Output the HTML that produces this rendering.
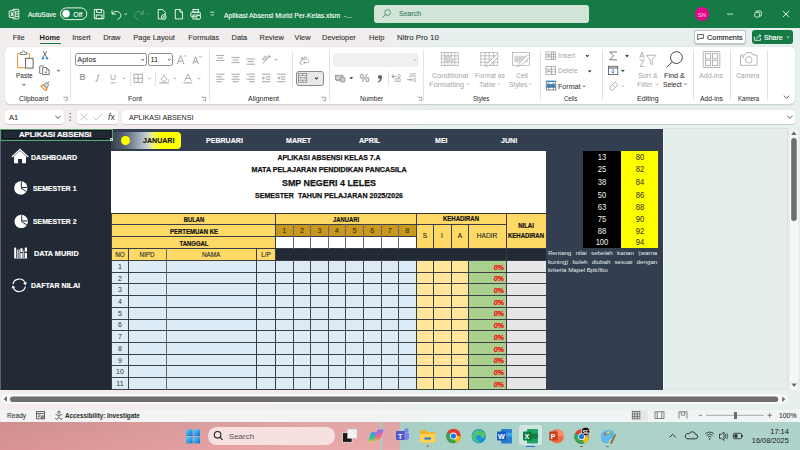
<!DOCTYPE html>
<html><head><meta charset="utf-8">
<style>
*{margin:0;padding:0;box-sizing:border-box}
html,body{width:800px;height:450px;overflow:hidden;font-family:"Liberation Sans",sans-serif}
body{position:relative;background:linear-gradient(90deg,#f3eded 0,#f2eded 370px,#e8f0ef 430px,#e7f0ef 800px)}
.a{position:absolute}
.t{position:absolute;white-space:nowrap;line-height:1}
svg{position:absolute;left:0;top:0;overflow:visible}
</style></head><body>
<div class="a" style="left:0.00px;top:0.00px;width:800.00px;height:27.60px;background:#157a43;"></div>
<svg width="800" height="28" viewBox="0 0 800 28" fill="none" stroke="#fff" stroke-width="0.9">
<rect x="12.6" y="9.3" width="6.2" height="9.6" rx="0.6"/>
<line x1="14.8" y1="11.8" x2="18.8" y2="11.8"/><line x1="14.8" y1="14.1" x2="18.8" y2="14.1"/><line x1="14.8" y1="16.4" x2="18.8" y2="16.4"/>
<rect x="9.2" y="10.8" width="6" height="6.6" fill="#157a43" rx="0.4"/>
<path d="M10.9 12.3 L13.5 16 M13.5 12.3 L10.9 16" stroke-width="1.1"/>
<rect x="60.5" y="7.9" width="26.3" height="11.7" rx="5.85"/>
<circle cx="66.1" cy="13.75" r="3.7" fill="#fff" stroke="none"/>
<path d="M94.3 9.5 h8 l1.6 1.6 v7.6 h-9.6 z"/><rect x="96.6" y="9.5" width="5" height="2.8"/><rect x="96.2" y="15" width="5.8" height="3.7"/>
<path d="M112 10.3 v3.8 h3.8"/><path d="M112.3 14 C113.5 11,118.5 10.5,120.3 13.5 C121.8 16,120 18.5,117.5 19.3"/>
<path d="M124.4 13.4 l1.3 1.3 l1.3 -1.3" stroke-width="0.8"/>
<g stroke="#5fa682"><path d="M143.4 10.3 v3.8 h-3.8"/><path d="M143.1 14 C141.9 11,136.9 10.5,135.1 13.5 C133.6 16,135.4 18.5,137.9 19.3"/>
<path d="M147.2 13.4 l1.3 1.3 l1.3 -1.3" stroke-width="0.8"/></g>
<path d="M158.2 9.5 h4.4 l2.6 2.6 v6.8 h-7 z"/><circle cx="163.8" cy="17" r="2.3" fill="#157a43"/><path d="M162.7 17 h2.2 M163.8 15.9 v2.2" stroke-width="0.7"/>
<path d="M175.3 9.5 h4.6 l2.6 2.6 v6.8 h-7.2 z"/><path d="M179.9 9.5 v2.6 h2.6"/>
<rect x="193" y="9.4" width="5.4" height="2.8"/><rect x="190.9" y="12.2" width="9.4" height="4.6" rx="0.8"/><rect x="193" y="15" width="5.4" height="4"/><circle cx="198.6" cy="17.3" r="2.1" fill="#157a43"/>
<path d="M210.4 12.2 h3.9" stroke-width="0.8"/><path d="M210.7 14.1 l1.65 1.7 l1.65 -1.7" stroke-width="0.8"/>
<path d="M727 14.1 h6" stroke-width="0.8"/>
<rect x="754.8" y="12.4" width="4.8" height="4.6" rx="0.9" stroke-width="0.8"/><path d="M756.2 12.2 v-0.3 a0.9 0.9 0 0 1 0.9 -0.9 h3.3 a0.9 0.9 0 0 1 0.9 0.9 v3.3 a0.9 0.9 0 0 1 -0.9 0.9 h-0.6" stroke-width="0.8"/>
<path d="M782.9 11 l6.3 6.1 M789.2 11 l-6.3 6.1" stroke-width="0.85"/>
</svg>
<div class="t" style="left:28.00px;top:12.06px;font-size:6.9px;color:#fff;transform:scaleX(0.94);transform-origin:0 0;-webkit-text-stroke:0.1px #fff;">AutoSave</div>
<div class="t" style="left:73.30px;top:11.76px;font-size:6.9px;color:#fff;-webkit-text-stroke:0.1px #fff;">Off</div>
<div class="t" style="left:224.30px;top:11.77px;font-size:7.0px;color:#fff;transform:scaleX(0.975);transform-origin:0 0;-webkit-text-stroke:0.1px #fff;">Aplikasi Absensi Murid Per-Kelas.xlsm &nbsp;-...</div>
<div class="a" style="left:374.40px;top:5.10px;width:215.00px;height:17.90px;background:#d1e4d8;border-radius:3px;"></div>
<svg width="800" height="28" fill="none" stroke="#4b8a66" stroke-width="0.9"><circle cx="387.6" cy="12.5" r="2.9"/><path d="M385.5 14.6 l-2.8 2.9" stroke-width="1"/></svg>
<div class="t" style="left:398.90px;top:10.07px;font-size:7.6px;color:#3f7d58;transform:scaleX(0.9253);transform-origin:0 0;-webkit-text-stroke:0.1px #3f7d58;">Search</div>
<div class="a" style="left:694.8px;top:7.2px;width:14px;height:14px;border-radius:50%;background:#e4058c"></div>
<div class="t" style="left:501.80px;width:400px;text-align:center;top:11.52px;font-size:6.0px;color:#ffd8ef;letter-spacing:-0.2px;">SN</div>
<div class="t" style="left:12.70px;top:33.64px;font-size:7.4px;color:#303030;-webkit-text-stroke:0.1px #303030;">File</div>
<div class="t" style="left:39.60px;top:33.64px;font-size:7.4px;color:#1a1a1a;font-weight:bold;">Home</div>
<div class="t" style="left:72.20px;top:33.64px;font-size:7.4px;color:#303030;-webkit-text-stroke:0.1px #303030;">Insert</div>
<div class="t" style="left:103.20px;top:33.64px;font-size:7.4px;color:#303030;-webkit-text-stroke:0.1px #303030;">Draw</div>
<div class="t" style="left:133.35px;top:33.64px;font-size:7.4px;color:#303030;-webkit-text-stroke:0.1px #303030;">Page Layout</div>
<div class="t" style="left:188.35px;top:33.64px;font-size:7.4px;color:#303030;-webkit-text-stroke:0.1px #303030;">Formulas</div>
<div class="t" style="left:231.60px;top:33.64px;font-size:7.4px;color:#303030;-webkit-text-stroke:0.1px #303030;">Data</div>
<div class="t" style="left:259.60px;top:33.64px;font-size:7.4px;color:#303030;-webkit-text-stroke:0.1px #303030;">Review</div>
<div class="t" style="left:294.60px;top:33.64px;font-size:7.4px;color:#303030;-webkit-text-stroke:0.1px #303030;">View</div>
<div class="t" style="left:322.10px;top:33.64px;font-size:7.4px;color:#303030;-webkit-text-stroke:0.1px #303030;">Developer</div>
<div class="t" style="left:369.10px;top:33.64px;font-size:7.4px;color:#303030;-webkit-text-stroke:0.1px #303030;">Help</div>
<div class="t" style="left:396.60px;top:33.64px;font-size:7.4px;color:#303030;transform:scaleX(1.06);transform-origin:0 0;-webkit-text-stroke:0.1px #303030;">Nitro Pro 10</div>
<div class="a" style="left:40.00px;top:42.60px;width:21.00px;height:1.50px;background:#157a43;border-radius:1px;"></div>
<div class="a" style="left:694.40px;top:30.10px;width:52.00px;height:13.50px;background:#fff;border:0.8px solid #c4c4c4;border-radius:3px;box-shadow:0 0.5px 0.8px rgba(0,0,0,.18);"></div>
<svg width="800" height="50" fill="none" stroke="#333" stroke-width="0.8"><path d="M697.6 34.6 h5.8 v3.8 h-3.8 l-1.8 1.6 z"/></svg>
<div class="t" style="left:706.80px;top:33.64px;font-size:7.4px;color:#2a2a2a;transform:scaleX(0.9972);transform-origin:0 0;-webkit-text-stroke:0.15px #2a2a2a;">Comments</div>
<div class="a" style="left:751.60px;top:30.10px;width:41.30px;height:13.50px;background:#157a43;border-radius:3px;"></div>
<svg width="800" height="50" fill="none" stroke="#fff" stroke-width="0.8"><path d="M754.4 36.5 v3.8 h6.2 v-2.2"/><path d="M756.6 38.8 c0.3 -2 1.6 -3 3.8 -3 M759.4 34.4 l1.6 1.4 l-1.6 1.4"/><path d="M786.9 36.5 l1.2 1.2 l1.2 -1.2"/></svg>
<div class="t" style="left:763.60px;top:33.64px;font-size:7.4px;color:#fff;transform:scaleX(0.9519);transform-origin:0 0;-webkit-text-stroke:0.15px #fff;">Share</div>
<div class="a" style="left:5.00px;top:46.60px;width:790.00px;height:57.30px;background:#fff;border-radius:5px;box-shadow:0 0.8px 1.4px rgba(0,0,0,.15);"></div>
<div class="a" style="left:70.30px;top:50.00px;width:0.80px;height:51.00px;background:#e3e3e3;"></div>
<div class="a" style="left:208.80px;top:50.00px;width:0.80px;height:51.00px;background:#e3e3e3;"></div>
<div class="a" style="left:291.60px;top:52.00px;width:0.80px;height:35.00px;background:#e3e3e3;"></div>
<div class="a" style="left:328.50px;top:50.00px;width:0.80px;height:51.00px;background:#e3e3e3;"></div>
<div class="a" style="left:423.40px;top:50.00px;width:0.80px;height:51.00px;background:#e3e3e3;"></div>
<div class="a" style="left:539.50px;top:50.00px;width:0.80px;height:51.00px;background:#e3e3e3;"></div>
<div class="a" style="left:601.50px;top:50.00px;width:0.80px;height:51.00px;background:#e3e3e3;"></div>
<div class="a" style="left:693.40px;top:50.00px;width:0.80px;height:51.00px;background:#e3e3e3;"></div>
<div class="a" style="left:729.70px;top:50.00px;width:0.80px;height:51.00px;background:#e3e3e3;"></div>
<div class="a" style="left:766.50px;top:50.00px;width:0.80px;height:51.00px;background:#e3e3e3;"></div>
<div class="a" style="left:129.50px;top:71.00px;width:0.80px;height:15.00px;background:#e3e3e3;"></div>
<div class="a" style="left:155.40px;top:71.00px;width:0.80px;height:15.00px;background:#e3e3e3;"></div>
<div class="a" style="left:388.00px;top:71.00px;width:0.80px;height:15.00px;background:#e3e3e3;"></div>
<div class="t" style="left:19.00px;top:94.52px;font-size:7.3px;color:#262626;transform:scaleX(0.9376);transform-origin:0 0;">Clipboard</div>
<div class="t" style="left:127.75px;top:94.52px;font-size:7.3px;color:#262626;transform:scaleX(0.9589);transform-origin:0 0;">Font</div>
<div class="t" style="left:248.40px;top:94.52px;font-size:7.3px;color:#262626;transform:scaleX(0.9553);transform-origin:0 0;">Alignment</div>
<div class="t" style="left:359.50px;top:94.52px;font-size:7.3px;color:#262626;transform:scaleX(0.896);transform-origin:0 0;">Number</div>
<div class="t" style="left:473.10px;top:94.52px;font-size:7.3px;color:#262626;transform:scaleX(0.8191);transform-origin:0 0;">Styles</div>
<div class="t" style="left:563.90px;top:94.52px;font-size:7.3px;color:#262626;transform:scaleX(0.8062);transform-origin:0 0;">Cells</div>
<div class="t" style="left:636.85px;top:94.52px;font-size:7.3px;color:#262626;transform:scaleX(0.9664);transform-origin:0 0;">Editing</div>
<div class="t" style="left:700.00px;top:94.52px;font-size:7.3px;color:#262626;transform:scaleX(0.9293);transform-origin:0 0;">Add-ins</div>
<div class="t" style="left:737.50px;top:94.52px;font-size:7.3px;color:#262626;transform:scaleX(0.8281);transform-origin:0 0;">Kamera</div>
<svg width="800" height="110" fill="none" stroke="#7a7a7a" stroke-width="0.7">
<path d="M63.3 97.2 h4 v3.6 M64.5 99.3 l2.4 1.8"/><path d="M201.6 97.2 h4 v3.6 M202.8 99.3 l2.4 1.8"/><path d="M321.4 97.2 h4 v3.6 M322.6 99.3 l2.4 1.8"/><path d="M417.7 97.2 h4 v3.6 M418.9 99.3 l2.4 1.8"/>
<path d="M784 95.7 l2.6 2.6 l2.6 -2.6" stroke="#444" stroke-width="0.9"/>
</svg>
<svg width="800" height="110" fill="none" stroke-width="0.9">
<path d="M20 53.8 h-1.8 q-0.6 0 -0.6 0.6 v12.6 q0 0.6 0.6 0.6 h7" stroke="#eda13a" stroke-width="1.1"/><path d="M27 53.8 h1.8 q0.6 0 0.6 0.6 v3.6" stroke="#eda13a" stroke-width="1.1"/>
<path d="M20.5 54.5 v-2 h1.6 a1.4 1.4 0 0 1 2.8 0 h1.6 v2 z" stroke="#666" stroke-width="0.8" fill="#fff"/>
<rect x="25.6" y="58.3" width="7.5" height="9.8" stroke="#555" fill="#fff"/>
<path d="M22.4 84 l1.5 1.4 l1.5 -1.4" stroke="#333" stroke-width="1"/>
<path d="M43.2 51.2 l3.4 6 M46.6 51.2 l-3.4 6" stroke="#444" stroke-width="0.75"/><circle cx="42.9" cy="58.2" r="1.25" fill="#3a90da" stroke="none"/><circle cx="47" cy="58.2" r="1.25" fill="#3a90da" stroke="none"/>
<path d="M43.8 66 h-3.6 q-0.5 0 -0.5 0.5 v6.6 q0 0.5 0.5 0.5 h1.6" stroke="#555" stroke-width="0.8"/><path d="M42.6 67.6 h4 l2.6 2.6 v4.3 h-6.6 z" stroke="#555" stroke-width="0.8" fill="#fff"/><path d="M46.6 67.6 v2.6 h2.6 M45.9 71.2 v2.2 M44.8 72.3 h2.2" stroke="#555" stroke-width="0.6"/>
<path d="M57.1 69.8 l1.4 1.4 l1.4 -1.4" stroke="#333" stroke-width="1"/>
<path d="M40.8 86.2 l2.6 -1.2 l3.6 3.4 l-1.3 2.2 z" fill="#fff" stroke="#e8862a" stroke-width="1.1" stroke-linejoin="round"/><path d="M43.6 85 l2.8 -2.6 l2.4 2.4 l-2 3.4 z" fill="#d8d8d8" stroke="#666" stroke-width="0.7"/><path d="M47.4 83.4 l1.8 -1.8" stroke="#555" stroke-width="0.9"/>
</svg>
<div class="t" style="left:15.70px;top:71.52px;font-size:7.3px;color:#262626;transform:scaleX(0.8901);transform-origin:0 0;">Paste</div>
<div class="a" style="left:75.25px;top:52.90px;width:71.25px;height:13.60px;background:#fff;border:0.8px solid #8c8c8c;border-radius:2.5px;"></div>
<div class="a" style="left:148.40px;top:52.90px;width:24.50px;height:13.60px;background:#fff;border:0.8px solid #8c8c8c;border-radius:2.5px;"></div>
<div class="t" style="left:77.30px;top:56.24px;font-size:7.4px;color:#222;">Aptos</div>
<div class="t" style="left:150.50px;top:56.24px;font-size:7.4px;color:#222;">11</div>
<svg width="800" height="110" fill="none" stroke="#333" stroke-width="0.8">
<path d="M141.3 59 l1.4 1.4 l1.4 -1.4"/><path d="M168 59 l1.4 1.4 l1.4 -1.4"/>
<g stroke="#8a8a8a"><path d="M177.3 64 l3.3 -8.5 l3.3 8.5 M178.5 61.2 h4.2"/><path d="M184 56.5 l1 -1 l1 1"/>
<path d="M192.8 64 l2.8 -7.2 l2.8 7.2 M193.8 61.8 h3.6"/><path d="M199.4 56.2 l1.2 1.2 l1.2 -1.2"/></g>
<g stroke="#9a9a9a"><path d="M122.5 77.8 l1.3 1.3 l1.3 -1.3"/><path d="M148 77.8 l1.3 1.3 l1.3 -1.3"/><path d="M173.4 77.8 l1.3 1.3 l1.3 -1.3"/><path d="M197.8 77.8 l1.3 1.3 l1.3 -1.3"/>
<rect x="134" y="74.2" width="8.3" height="8.3"/><path d="M138.15 74.2 v8.3 M134 78.35 h8.3"/>
<path d="M111 74.5 v3.3 a2 2 0 0 0 4 0 v-3.3 M110.5 82.8 h5"/>
<path d="M161 79 l3 -3.2 l3 3 l-3 3 z M164 75.8 v-1.4"/><path d="M168 79 q1 1.5 0 2.5"/><path d="M159.3 82.8 h9.6" stroke="#b0b0b0" stroke-width="1.2"/>
<path d="M184.5 81 l3.5 -7 l3.5 7 M185.7 78.5 h4.6"/><path d="M183.4 82.8 h9" stroke="#b0b0b0" stroke-width="1.2"/>
</g></svg>
<div class="t" style="left:79.40px;top:74.26px;font-size:8.2px;color:#9a9a9a;font-weight:bold;">B</div>
<svg width="800" height="110" fill="none" stroke="#9a9a9a" stroke-width="0.8"><path d="M96.6 81 l2 -5.8 M95.4 81 h2.4 M97.5 75.2 h2.4"/></svg>
<svg width="800" height="110" fill="none" stroke="#8e8e8e" stroke-width="0.8">
<text x="261.5" y="60" font-size="5.4" fill="#8e8e8e" stroke="none" font-family="Liberation Sans" transform="rotate(-40 264 58)">ab</text>
<path d="M216.3 55.4 h8 M217.3 58 h6 M216.3 60.6 h8"/>
<path d="M231.4 57.4 h8.3 M232.6 60 h6 M231.4 62.6 h8.3"/>
<path d="M246.5 59 h8.3 M247.6 61.6 h6 M246.5 64.2 h8.3"/>
<path d="M262.5 63.5 l7.5 -7.5 M268 56 h2 v2"/><path d="M274.5 59 l1.3 1.3 l1.3 -1.3"/>
<path d="M216.3 74.2 h8 M216.3 76.7 h5.6 M216.3 79.2 h8 M216.3 81.7 h5.6"/>
<path d="M231.4 74.2 h8.3 M232.6 76.7 h6 M231.4 79.2 h8.3 M232.6 81.7 h6"/>
<path d="M246.5 74.2 h8.3 M249.2 76.7 h5.6 M246.5 79.2 h8.3 M249.2 81.7 h5.6"/>
<path d="M262 74.2 h8.3 M266.2 76.8 h4.1 M266.2 79.2 h4.1 M262 81.7 h8.3 M262.2 78 h3 M263.6 76.7 l-1.4 1.3 l1.4 1.3"/>
<path d="M277 74.2 h8.3 M281.2 76.8 h4.1 M281.2 79.2 h4.1 M277 81.7 h8.3 M277.2 78 h3 M278.8 76.7 l1.4 1.3 l-1.4 1.3"/>
<path d="M302.5 60.8 q-2.5 0 -2.5 1.8 q0 1.8 2.5 1.8 M303.6 62.6 h4 q1 0 1 -1.3 v-1.5 M303.6 62.6 l1.2 -1.1 M303.6 62.6 l1.2 1.1" stroke-width="0.7"/>
</svg>
<div class="t" style="left:300.50px;top:54.55px;font-size:6.2px;color:#8e8e8e;">ab</div>
<div class="a" style="left:295.60px;top:71.25px;width:28.10px;height:14.35px;background:#e9e9e9;border:0.8px solid #8a8a8a;border-radius:3px;"></div>
<svg width="800" height="110" fill="none" stroke="#777" stroke-width="0.7">
<rect x="298.6" y="73.6" width="8.2" height="8.6" fill="#f6f6f6"/><path d="M298.6 75.6 h8.2 M298.6 80.2 h8.2 M302.7 73.6 v2 M302.7 80.2 v2 M299.6 77.9 h6.2 M300.6 77 l-1 0.9 l1 0.9 M304.8 77 l1 0.9 l-1 0.9"/>
<path d="M315.1 77.6 l1.4 1.4 l1.4 -1.4" stroke="#333" stroke-width="1.1"/>
</svg>
<div class="a" style="left:333.20px;top:52.90px;width:85.40px;height:14.00px;background:#f0f0f0;border-radius:3.5px;"></div>
<svg width="800" height="110" fill="none" stroke="#8e8e8e" stroke-width="0.8">
<path d="M413.6 59.4 l1.2 1.2 l1.2 -1.2" stroke="#aaa"/>
<rect x="335.4" y="75.2" width="7.5" height="4.6" fill="#ddd"/><path d="M336 80.6 h7 M336.2 76.8 h2 M339.6 76.8 h2"/><rect x="340.6" y="77.4" width="4.4" height="4.6" rx="0.8" fill="#ccc"/><path d="M350 77.6 h2.6 l-1.3 1.4 z" fill="#333" stroke="#333" stroke-width="0.6"/>
<path d="M391.8 76.5 l2.2 -2 M391.8 76.5 l2.2 2 M391.8 76.5 h4.5"/><path d="M407 79.7 h5 l-1.5 -1.5 M412 79.7 l-1.5 1.5"/>
</svg>
<div class="t" style="left:359.80px;top:73.19px;font-size:11px;color:#808080;">%</div>
<svg width="800" height="110" stroke="none" fill="#666"><circle cx="380" cy="77" r="2.1"/><path d="M381.6 77.5 q0.6 3.5 -3.6 5 l-0.3 -0.6 q2.6 -1.3 2.4 -3.6 z"/></svg>
<div class="t" style="left:397.50px;top:74.06px;font-size:5.6px;color:#8e8e8e;">0</div>
<div class="t" style="left:393.20px;top:78.26px;font-size:5.6px;color:#8e8e8e;">.00</div>
<div class="t" style="left:408.00px;top:73.26px;font-size:5.6px;color:#8e8e8e;">.00</div>
<div class="t" style="left:413.00px;top:78.26px;font-size:5.6px;color:#8e8e8e;">0</div>
<svg width="800" height="110" fill="none" stroke="#a8a8a8" stroke-width="0.7">
<rect x="441.2" y="52.5" width="17" height="13"/><path d="M441.2 55.8 h17 M441.2 59 h17 M441.2 62.3 h17 M444.6 52.5 v13 M448 52.5 v13 M451.4 52.5 v13 M454.8 52.5 v13"/>
<rect x="444.6" y="55.8" width="6.8" height="6.5" fill="#d4d4d4" stroke="none"/><rect x="448" y="59" width="6.8" height="3.3" fill="#d4d4d4" stroke="none"/>
<rect x="480.8" y="52.5" width="17" height="13"/><path d="M480.8 55.8 h17 M480.8 59 h17 M480.8 62.3 h17 M485 52.5 v13 M489.2 52.5 v13 M493.4 52.5 v13"/>
<path d="M486 67 l2 -4 l8.5 -8.5 l2 2 l-8.5 8.5 z" fill="#fff"/>
<rect x="512.6" y="52.5" width="17" height="13"/><rect x="514.4" y="55.8" width="13.4" height="6.5" fill="#d4d4d4" stroke="none"/>
<path d="M517.5 67 l2 -4 l8.5 -8.5 l2 2 l-8.5 8.5 z" fill="#fff"/>
</svg>
<div class="t" style="left:431.65px;top:71.52px;font-size:7.3px;color:#a6a6a6;transform:scaleX(0.9918);transform-origin:0 0;">Conditional</div>
<div class="t" style="left:429.40px;top:80.92px;font-size:7.3px;color:#a6a6a6;transform:scaleX(1.0086);transform-origin:0 0;">Formatting</div>
<div class="t" style="left:474.90px;top:71.52px;font-size:7.3px;color:#a6a6a6;transform:scaleX(0.9041);transform-origin:0 0;">Format as</div>
<div class="t" style="left:478.90px;top:80.92px;font-size:7.3px;color:#a6a6a6;transform:scaleX(0.957);transform-origin:0 0;">Table</div>
<div class="t" style="left:515.65px;top:71.52px;font-size:7.3px;color:#a6a6a6;transform:scaleX(0.9325);transform-origin:0 0;">Cell</div>
<div class="t" style="left:508.65px;top:80.92px;font-size:7.3px;color:#a6a6a6;transform:scaleX(0.9322);transform-origin:0 0;">Styles</div>
<svg width="800" height="110" fill="none" stroke="#a6a6a6" stroke-width="0.7"><path d="M466.7 83.6 l1.3 1.3 l1.3 -1.3 M497.5 83.6 l1.3 1.3 l1.3 -1.3 M529 83.6 l1.3 1.3 l1.3 -1.3"/></svg>
<svg width="800" height="110" fill="none" stroke="#9a9a9a" stroke-width="0.7">
<rect x="546" y="52" width="9.6" height="7.4"/><path d="M546 54.5 h9.6 M546 57 h9.6 M551.5 52 v7.4 M553.5 52 v7.4 M547.5 55.7 h2.6 M548.8 54.4 v2.6"/>
<rect x="546" y="66.6" width="9.6" height="7.8"/><path d="M546 69.2 h9.6 M546 71.8 h9.6 M551.5 66.6 v7.8 M547.5 69.8 l2.2 2.2 M549.7 69.8 l-2.2 2.2"/>
<path d="M586 55.2 l1.3 1.3 l1.3 -1.3 M588.4 70.3 l1.3 1.3 l1.3 -1.3" stroke="#333" stroke-width="1.1"/>
<rect x="546.2" y="81.6" width="9.6" height="8.4" stroke="#555"/><rect x="546.6" y="84.2" width="8.8" height="3.2" fill="#2b88d8" stroke="none"/><path d="M546.2 81.2 h9.6" stroke="#2b88d8" stroke-width="1.2"/><path d="M548.8 81.6 v8.4 M553.2 81.6 v8.4 M546.2 84.2 h9.6 M546.2 87.4 h9.6" stroke="#666" stroke-width="0.6"/>
<path d="M582.8 85.6 l1.3 1.3 l1.3 -1.3" stroke="#333" stroke-width="0.8"/>
</svg>
<div class="t" style="left:557.75px;top:52.32px;font-size:7.3px;color:#a6a6a6;transform:scaleX(0.9397);transform-origin:0 0;">Insert</div>
<div class="t" style="left:557.75px;top:67.42px;font-size:7.3px;color:#a6a6a6;transform:scaleX(0.936);transform-origin:0 0;">Delete</div>
<div class="t" style="left:557.75px;top:82.62px;font-size:7.3px;color:#262626;transform:scaleX(0.9762);transform-origin:0 0;">Format</div>
<svg width="800" height="110" fill="none" stroke="#555" stroke-width="0.8">
<path d="M617 52 h-7.2 l3.8 3.9 l-3.8 3.9 h7.2"/><path d="M625.6 55 l1.4 1.4 l1.4 -1.4" stroke="#333" stroke-width="1.1"/>
<rect x="608.4" y="66.3" width="9.4" height="8.3"/><path d="M608.4 68 h9.4" stroke-width="1"/><path d="M613.1 69 v4 M611.5 71.5 l1.6 1.6 l1.6 -1.6" stroke="#2b88d8" stroke-width="0.9"/><path d="M621.5 69.9 l1.4 1.4 l1.4 -1.4" stroke="#333" stroke-width="1.1"/>
<g stroke="#a6a6a6"><path d="M610 87 l5 -5 l3 3 l-5 5 h-2 z M612.5 84.5 l3 3"/><path d="M621.5 85.5 l1.2 1.2 l1.2 -1.2"/>
<path d="M646.3 55.2 h9.8 l-3.9 4.6 v4.8 l-2 -1 v-3.8 z"/><path d="M639.6 58.4 l2.4 -6.3 l2.4 6.3 M640.5 56.2 h3"/><path d="M639.9 60.2 h4.3 l-4.3 6.3 h4.4"/>
<path d="M655.8 83.7 l1.2 1.2 l1.2 -1.2"/></g>
<circle cx="676.4" cy="57.6" r="5.9" stroke="#333" stroke-width="0.9"/><path d="M672.2 61.8 l-5.7 5.8" stroke="#333" stroke-width="0.9"/>
<path d="M684.3 83.5 l1.3 1.3 l1.3 -1.3" stroke="#333" stroke-width="0.8"/>
<g stroke="#a6a6a6"><rect x="703.2" y="51.5" width="16.6" height="16" rx="0.6"/><rect x="705.4" y="53.6" width="5.3" height="5.2"/><rect x="712.4" y="53.6" width="5.3" height="5.2"/><rect x="705.4" y="60.3" width="5.3" height="5.2"/><rect x="712.4" y="60.3" width="5.3" height="5.2"/>
<path d="M740.5 55 h4.5 l1.5 -2.4 h5 l1.5 2.4 h4 v10.3 h-16.5 z"/><circle cx="748.8" cy="59.8" r="3.2"/><circle cx="743" cy="57" r="0.5" fill="#a6a6a6"/></g>
</svg>
<div class="t" style="left:637.90px;top:71.52px;font-size:7.3px;color:#a6a6a6;transform:scaleX(0.9655);transform-origin:0 0;">Sort &amp;</div>
<div class="t" style="left:636.85px;top:80.92px;font-size:7.3px;color:#a6a6a6;transform:scaleX(0.9537);transform-origin:0 0;">Filter</div>
<div class="t" style="left:664.00px;top:71.52px;font-size:7.3px;color:#262626;transform:scaleX(0.9905);transform-origin:0 0;">Find &amp;</div>
<div class="t" style="left:662.60px;top:80.92px;font-size:7.3px;color:#262626;transform:scaleX(0.9212);transform-origin:0 0;">Select</div>
<div class="t" style="left:699.40px;top:71.52px;font-size:7.3px;color:#a6a6a6;transform:scaleX(0.9737);transform-origin:0 0;">Add-ins</div>
<div class="t" style="left:736.20px;top:71.52px;font-size:7.3px;color:#a6a6a6;transform:scaleX(0.9077);transform-origin:0 0;">Camera</div>
<div class="a" style="left:5.25px;top:109.75px;width:59.00px;height:13.80px;background:#fff;border-radius:3px;box-shadow:0 0.5px 1px rgba(0,0,0,.15);"></div>
<div class="t" style="left:9.00px;top:113.94px;font-size:7.4px;color:#333;-webkit-text-stroke:0.15px #333;">A1</div>
<div class="a" style="left:76.80px;top:109.75px;width:41.70px;height:13.80px;background:#fff;border-radius:3px;box-shadow:0 0.5px 1px rgba(0,0,0,.15);"></div>
<div class="a" style="left:122.00px;top:109.75px;width:672.80px;height:13.80px;background:#fff;border-radius:3px;box-shadow:0 0.5px 1px rgba(0,0,0,.15);"></div>
<svg width="800" height="130" fill="none" stroke="#444" stroke-width="0.9">
<path d="M55.4 115.8 l2.6 2.6 l2.6 -2.6"/>
<circle cx="70.2" cy="113.6" r="0.65" fill="#444" stroke="none"/><circle cx="70.2" cy="116.9" r="0.65" fill="#444" stroke="none"/><circle cx="70.2" cy="120.2" r="0.65" fill="#444" stroke="none"/>
<path d="M80.5 113.2 l7 7 M87.5 113.2 l-7 7" stroke="#b5b5b5" stroke-width="0.8"/><path d="M93.2 117 l3 3 l6.5 -6.5" stroke="#b5b5b5" stroke-width="0.8"/>
<path d="M787.4 115.8 l2.6 2.6 l2.6 -2.6"/>
</svg>
<div class="t" style="left:108.00px;top:113.22px;font-size:8.6px;color:#333;font-family:"Liberation Serif",serif;"><i>f</i>x</div>
<div class="t" style="left:129.00px;top:114.12px;font-size:7.3px;color:#222;transform:scaleX(0.98);transform-origin:0 0;">APLIKASI ABSENSI</div>
<div class="a" style="left:0.00px;top:128.80px;width:787.00px;height:261.00px;background:#e4efed;"></div>
<div class="a" style="left:663.00px;top:128.30px;width:124.40px;height:0.80px;background:#d9e2e0;"></div>
<div class="a" style="left:786.60px;top:128.30px;width:0.80px;height:261.50px;background:#d9e2e0;"></div>
<div class="a" style="left:663.00px;top:389.40px;width:124.40px;height:0.80px;background:#dde5e3;"></div>
<div class="a" style="left:111.00px;top:128.80px;width:552.00px;height:261.00px;background:#333f50;"></div>
<div class="a" style="left:663.00px;top:128.80px;width:0.80px;height:261.00px;background:#f4f8f7;"></div>
<div class="a" style="left:0.00px;top:128.80px;width:111.20px;height:261.00px;background:#222a35;"></div>
<div class="a" style="left:0.00px;top:128.80px;width:1.00px;height:261.00px;background:#5a6470;"></div>
<div class="a" style="left:0.00px;top:128.70px;width:112.90px;height:12.20px;background:#222a35;border:1.5px solid #55a673;"></div>
<div class="a" style="left:1.50px;top:130.20px;width:109.90px;height:9.20px;background:transparent;border:0.8px solid #12161c;"></div>
<div class="a" style="left:109.90px;top:138.20px;width:3.20px;height:3.20px;background:#1e7a40;border:0.4px solid #cfe6d6;border-radius:0.6px;"></div>
<div class="t" style="left:19.40px;top:131.00px;font-size:7.8px;color:#fff;font-weight:bold;transform:scaleX(0.9938);transform-origin:0 0;-webkit-text-stroke:0.15px #fff;">APLIKASI ABSENSI</div>
<svg width="800" height="300" fill="#fff" stroke="none">
<path d="M11.9 157 L20 149.3 L28.2 157" fill="none" stroke="#fff" stroke-width="1.3"/>
<path d="M14 156.3 L20 150.8 L26 156.3 V163.2 H22 V159 H18.1 V163.2 H14 Z"/>
<circle cx="20.8" cy="188" r="6.7"/>
<path d="M21.3 181.8 V187.5 H27" fill="none" stroke="#222a35" stroke-width="1"/>
<path d="M21 188 L26.5 191.6" fill="none" stroke="#222a35" stroke-width="1"/>
<circle cx="21.2" cy="221.4" r="6.7"/>
<path d="M21.7 215.2 V220.9 H27.4" fill="none" stroke="#222a35" stroke-width="1"/>
<path d="M21.4 221.4 L26.9 225" fill="none" stroke="#222a35" stroke-width="1"/>
<rect x="14.2" y="247.6" width="2" height="10.6"/><rect x="16.9" y="249.8" width="1" height="8.4" fill="#cfd3d8"/><rect x="18.5" y="249.2" width="1.2" height="9" fill="#e8eaec"/>
<rect x="20.4" y="248.2" width="2.2" height="10"/><rect x="20.4" y="252" width="2.2" height="1.2" fill="#222a35"/><rect x="23.2" y="250.4" width="1" height="7.8" fill="#cfd3d8"/><rect x="24.8" y="247.6" width="2.2" height="10.6"/><rect x="24.8" y="251.6" width="2.2" height="1.4" fill="#222a35"/>
<rect x="14" y="257.8" width="13.2" height="1" fill="#9aa0a8"/>
<g fill="none" stroke="#fff" stroke-width="1.15"><path d="M13.0 284.2 A6.3 6.3 0 0 1 25.1 283.15"/><path d="M25.4 286.4 A6.3 6.3 0 0 1 13.3 287.45"/></g>
<path d="M25.8 285.2 L26.8 282.0 L23.0 283.3 Z"/><path d="M12.6 285.4 L11.6 288.6 L15.4 287.3 Z"/>
</svg>
<div class="t" style="left:30.80px;top:154.02px;font-size:7.3px;color:#fff;font-weight:bold;transform:scaleX(0.97);transform-origin:0 0;-webkit-text-stroke:0.15px #fff;">DASHBOARD</div>
<div class="t" style="left:33.20px;top:185.22px;font-size:7.3px;color:#fff;font-weight:bold;transform:scaleX(0.94);transform-origin:0 0;-webkit-text-stroke:0.15px #fff;">SEMESTER 1</div>
<div class="t" style="left:33.30px;top:218.02px;font-size:7.3px;color:#fff;font-weight:bold;transform:scaleX(0.94);transform-origin:0 0;-webkit-text-stroke:0.15px #fff;">SEMESTER 2</div>
<div class="t" style="left:33.70px;top:250.12px;font-size:7.3px;color:#fff;font-weight:bold;transform:scaleX(0.995);transform-origin:0 0;-webkit-text-stroke:0.15px #fff;">DATA MURID</div>
<div class="t" style="left:30.50px;top:281.82px;font-size:7.3px;color:#fff;font-weight:bold;transform:scaleX(0.97);transform-origin:0 0;-webkit-text-stroke:0.15px #fff;">DAFTAR NILAI</div>
<div class="a" style="left:112.5px;top:131.9px;width:68.1px;height:16.9px;border-radius:0 4px 4px 0;background:linear-gradient(90deg,#3b4657 0%,#5a6677 18%,#c0cad6 48%,#eef080 58%,#ffff00 70%,#ffff00 100%)"></div>
<div class="a" style="left:120.6px;top:135.7px;width:9px;height:9px;border-radius:50%;background:#ffff00"></div>
<div class="t" style="left:143.30px;top:136.67px;font-size:7.6px;color:#111;font-weight:bold;transform:scaleX(0.93);transform-origin:0 0;-webkit-text-stroke:0.15px #111;">JANUARI</div>
<div class="t" style="left:205.60px;top:136.67px;font-size:7.6px;color:#fff;font-weight:bold;transform:scaleX(0.93);transform-origin:0 0;-webkit-text-stroke:0.12px #fff;">PEBRUARI</div>
<div class="t" style="left:285.60px;top:136.67px;font-size:7.6px;color:#fff;font-weight:bold;transform:scaleX(0.93);transform-origin:0 0;-webkit-text-stroke:0.12px #fff;">MARET</div>
<div class="t" style="left:358.60px;top:136.67px;font-size:7.6px;color:#fff;font-weight:bold;transform:scaleX(0.93);transform-origin:0 0;-webkit-text-stroke:0.12px #fff;">APRIL</div>
<div class="t" style="left:435.20px;top:136.67px;font-size:7.6px;color:#fff;font-weight:bold;transform:scaleX(0.93);transform-origin:0 0;-webkit-text-stroke:0.12px #fff;">MEI</div>
<div class="t" style="left:500.60px;top:136.67px;font-size:7.6px;color:#fff;font-weight:bold;transform:scaleX(0.93);transform-origin:0 0;-webkit-text-stroke:0.12px #fff;">JUNI</div>
<div class="a" style="left:111.20px;top:150.80px;width:435.10px;height:62.00px;background:#fff;"></div>
<div class="t" style="left:129.40px;width:400px;text-align:center;top:154.15px;font-size:7.8px;color:#111;font-weight:bold;transform:scaleX(0.89);transform-origin:50% 0;-webkit-text-stroke:0.25px #111;">APLIKASI ABSENSI KELAS 7.A</div>
<div class="t" style="left:129.40px;width:400px;text-align:center;top:165.60px;font-size:7.8px;color:#111;font-weight:bold;transform:scaleX(0.92);transform-origin:50% 0;-webkit-text-stroke:0.25px #111;">MATA PELAJARAN PENDIDIKAN PANCASILA</div>
<div class="t" style="left:129.10px;width:400px;text-align:center;top:178.10px;font-size:9.8px;color:#111;font-weight:bold;transform:scaleX(0.905);transform-origin:50% 0;-webkit-text-stroke:0.25px #111;">SMP NEGERI 4 LELES</div>
<div class="t" style="left:128.80px;width:400px;text-align:center;top:192.00px;font-size:7.8px;color:#111;font-weight:bold;transform:scaleX(0.91);transform-origin:50% 0;-webkit-text-stroke:0.25px #111;">SEMESTER &nbsp;TAHUN PELAJARAN 2025/2026</div>
<div class="a" style="left:583.30px;top:151.00px;width:37.40px;height:97.00px;background:#000;"></div>
<div class="a" style="left:620.70px;top:151.00px;width:37.40px;height:97.00px;background:#ffff00;"></div>
<div class="t" style="left:402.40px;width:400px;text-align:center;top:154.06px;font-size:8.2px;color:#f4f4f4;transform:scaleX(0.93);transform-origin:50% 0;">13</div>
<div class="t" style="left:440.10px;width:400px;text-align:center;top:154.06px;font-size:8.2px;color:#2a2a10;transform:scaleX(0.93);transform-origin:50% 0;">80</div>
<div class="t" style="left:402.40px;width:400px;text-align:center;top:166.16px;font-size:8.2px;color:#f4f4f4;transform:scaleX(0.93);transform-origin:50% 0;">25</div>
<div class="t" style="left:440.10px;width:400px;text-align:center;top:166.16px;font-size:8.2px;color:#2a2a10;transform:scaleX(0.93);transform-origin:50% 0;">82</div>
<div class="t" style="left:402.40px;width:400px;text-align:center;top:178.96px;font-size:8.2px;color:#f4f4f4;transform:scaleX(0.93);transform-origin:50% 0;">38</div>
<div class="t" style="left:440.10px;width:400px;text-align:center;top:178.96px;font-size:8.2px;color:#2a2a10;transform:scaleX(0.93);transform-origin:50% 0;">84</div>
<div class="t" style="left:402.40px;width:400px;text-align:center;top:192.06px;font-size:8.2px;color:#f4f4f4;transform:scaleX(0.93);transform-origin:50% 0;">50</div>
<div class="t" style="left:440.10px;width:400px;text-align:center;top:192.06px;font-size:8.2px;color:#2a2a10;transform:scaleX(0.93);transform-origin:50% 0;">86</div>
<div class="t" style="left:402.40px;width:400px;text-align:center;top:204.16px;font-size:8.2px;color:#f4f4f4;transform:scaleX(0.93);transform-origin:50% 0;">63</div>
<div class="t" style="left:440.10px;width:400px;text-align:center;top:204.16px;font-size:8.2px;color:#2a2a10;transform:scaleX(0.93);transform-origin:50% 0;">88</div>
<div class="t" style="left:402.40px;width:400px;text-align:center;top:215.86px;font-size:8.2px;color:#f4f4f4;transform:scaleX(0.93);transform-origin:50% 0;">75</div>
<div class="t" style="left:440.10px;width:400px;text-align:center;top:215.86px;font-size:8.2px;color:#2a2a10;transform:scaleX(0.93);transform-origin:50% 0;">90</div>
<div class="t" style="left:402.40px;width:400px;text-align:center;top:227.66px;font-size:8.2px;color:#f4f4f4;transform:scaleX(0.93);transform-origin:50% 0;">88</div>
<div class="t" style="left:440.10px;width:400px;text-align:center;top:227.66px;font-size:8.2px;color:#2a2a10;transform:scaleX(0.93);transform-origin:50% 0;">92</div>
<div class="t" style="left:402.40px;width:400px;text-align:center;top:239.06px;font-size:8.2px;color:#f4f4f4;transform:scaleX(0.93);transform-origin:50% 0;">100</div>
<div class="t" style="left:440.10px;width:400px;text-align:center;top:239.06px;font-size:8.2px;color:#2a2a10;transform:scaleX(0.93);transform-origin:50% 0;">94</div>
<div class="t" style="left:547.90px;top:249.95px;font-size:6.2px;color:#e6eaef;text-align:justify;text-align-last:justify;width:109.4px;">Rentang nilai sebelah kanan (warna</div>
<div class="t" style="left:547.90px;top:258.70px;font-size:6.2px;color:#e6eaef;text-align:justify;text-align-last:justify;width:109.4px;">kuning) boleh diubah sesuai dengan</div>
<div class="t" style="left:547.90px;top:267.45px;font-size:6.2px;color:#e6eaef;">kriteria Mapel Bpk/Ibu</div>
<div class="a" style="left:111.50px;top:213.20px;width:163.80px;height:46.88px;background:#ffd966;"></div>
<div class="a" style="left:275.30px;top:213.20px;width:140.80px;height:11.72px;background:#ffd966;"></div>
<div class="a" style="left:275.30px;top:224.92px;width:140.80px;height:11.72px;background:#c8981c;"></div>
<div class="a" style="left:275.30px;top:236.64px;width:140.80px;height:11.72px;background:#fff;"></div>
<div class="a" style="left:416.10px;top:213.20px;width:130.10px;height:35.16px;background:#ffd966;"></div>
<div class="a" style="left:275.30px;top:248.36px;width:270.90px;height:11.72px;background:#222a35;"></div>
<div class="a" style="left:111.50px;top:260.08px;width:304.60px;height:128.92px;background:#ddebf7;"></div>
<div class="a" style="left:416.10px;top:260.08px;width:52.50px;height:128.92px;background:#ffe699;"></div>
<div class="a" style="left:468.60px;top:260.08px;width:37.65px;height:128.92px;background:#a9d08e;"></div>
<div class="a" style="left:506.25px;top:260.08px;width:39.95px;height:128.92px;background:#e7e6e6;"></div>
<div class="a" style="left:111.00px;top:212.90px;width:435.70px;height:1.20px;background:#333;"></div>
<div class="a" style="left:111.00px;top:224.00px;width:164.80px;height:1.00px;background:#3a3d42;"></div>
<div class="a" style="left:111.00px;top:236.00px;width:164.80px;height:1.00px;background:#3a3d42;"></div>
<div class="a" style="left:111.00px;top:248.00px;width:164.80px;height:1.00px;background:#3a3d42;"></div>
<div class="a" style="left:274.80px;top:224.00px;width:231.95px;height:1.00px;background:#3a3d42;"></div>
<div class="a" style="left:274.80px;top:236.00px;width:141.80px;height:1.00px;background:#3a3d42;"></div>
<div class="a" style="left:274.80px;top:248.00px;width:271.90px;height:1.00px;background:#3a3d42;"></div>
<div class="a" style="left:111.00px;top:259.90px;width:435.70px;height:1.20px;background:#3a3d42;"></div>
<div class="a" style="left:111.00px;top:271.95px;width:435.70px;height:1.10px;background:#3d4146;"></div>
<div class="a" style="left:111.00px;top:282.95px;width:435.70px;height:1.10px;background:#3d4146;"></div>
<div class="a" style="left:111.00px;top:294.95px;width:435.70px;height:1.10px;background:#3d4146;"></div>
<div class="a" style="left:111.00px;top:306.95px;width:435.70px;height:1.10px;background:#3d4146;"></div>
<div class="a" style="left:111.00px;top:318.95px;width:435.70px;height:1.10px;background:#3d4146;"></div>
<div class="a" style="left:111.00px;top:329.95px;width:435.70px;height:1.10px;background:#3d4146;"></div>
<div class="a" style="left:111.00px;top:341.95px;width:435.70px;height:1.10px;background:#3d4146;"></div>
<div class="a" style="left:111.00px;top:353.95px;width:435.70px;height:1.10px;background:#3d4146;"></div>
<div class="a" style="left:111.00px;top:364.95px;width:435.70px;height:1.10px;background:#3d4146;"></div>
<div class="a" style="left:111.00px;top:376.95px;width:435.70px;height:1.10px;background:#3d4146;"></div>
<div class="a" style="left:111.00px;top:388.95px;width:435.70px;height:1.10px;background:#3d4146;"></div>
<div class="a" style="left:111.00px;top:212.70px;width:1.00px;height:176.80px;background:#3a3d42;"></div>
<div class="a" style="left:275.00px;top:212.70px;width:1.00px;height:176.80px;background:#3a3d42;"></div>
<div class="a" style="left:292.90px;top:224.42px;width:1.20px;height:24.44px;background:#666a70;"></div>
<div class="a" style="left:309.90px;top:224.42px;width:1.20px;height:24.44px;background:#666a70;"></div>
<div class="a" style="left:327.90px;top:224.42px;width:1.20px;height:24.44px;background:#666a70;"></div>
<div class="a" style="left:344.90px;top:224.42px;width:1.20px;height:24.44px;background:#666a70;"></div>
<div class="a" style="left:362.90px;top:224.42px;width:1.20px;height:24.44px;background:#666a70;"></div>
<div class="a" style="left:380.90px;top:224.42px;width:1.20px;height:24.44px;background:#666a70;"></div>
<div class="a" style="left:397.90px;top:224.42px;width:1.20px;height:24.44px;background:#666a70;"></div>
<div class="a" style="left:292.90px;top:259.58px;width:1.20px;height:129.92px;background:#43474c;"></div>
<div class="a" style="left:309.90px;top:259.58px;width:1.20px;height:129.92px;background:#43474c;"></div>
<div class="a" style="left:327.90px;top:259.58px;width:1.20px;height:129.92px;background:#43474c;"></div>
<div class="a" style="left:344.90px;top:259.58px;width:1.20px;height:129.92px;background:#43474c;"></div>
<div class="a" style="left:362.90px;top:259.58px;width:1.20px;height:129.92px;background:#43474c;"></div>
<div class="a" style="left:380.90px;top:259.58px;width:1.20px;height:129.92px;background:#43474c;"></div>
<div class="a" style="left:397.90px;top:259.58px;width:1.20px;height:129.92px;background:#43474c;"></div>
<div class="a" style="left:416.00px;top:212.70px;width:1.00px;height:36.16px;background:#3a3d42;"></div>
<div class="a" style="left:416.00px;top:259.58px;width:1.00px;height:129.92px;background:#3a3d42;"></div>
<div class="a" style="left:433.00px;top:224.42px;width:1.00px;height:24.44px;background:#3a3d42;"></div>
<div class="a" style="left:433.00px;top:259.58px;width:1.00px;height:129.92px;background:#3a3d42;"></div>
<div class="a" style="left:451.00px;top:224.42px;width:1.00px;height:24.44px;background:#3a3d42;"></div>
<div class="a" style="left:451.00px;top:259.58px;width:1.00px;height:129.92px;background:#3a3d42;"></div>
<div class="a" style="left:468.00px;top:224.42px;width:1.00px;height:24.44px;background:#3a3d42;"></div>
<div class="a" style="left:468.00px;top:259.58px;width:1.00px;height:129.92px;background:#3a3d42;"></div>
<div class="a" style="left:506.00px;top:212.70px;width:1.00px;height:176.80px;background:#3a3d42;"></div>
<div class="a" style="left:546.00px;top:212.70px;width:1.00px;height:176.80px;background:#3a3d42;"></div>
<div class="a" style="left:128.00px;top:247.86px;width:1.00px;height:141.64px;background:#3a3d42;"></div>
<div class="a" style="left:165.85px;top:247.86px;width:1.30px;height:141.64px;background:#666a70;"></div>
<div class="a" style="left:256.00px;top:247.86px;width:1.00px;height:141.64px;background:#3a3d42;"></div>
<div class="t" style="left:-6.00px;width:400px;text-align:center;top:216.17px;font-size:7.0px;color:#111;font-weight:bold;transform:scaleX(0.84);transform-origin:50% 0;-webkit-text-stroke:0.2px #111;">BULAN</div>
<div class="t" style="left:-6.30px;width:400px;text-align:center;top:228.07px;font-size:7.0px;color:#111;font-weight:bold;transform:scaleX(0.86);transform-origin:50% 0;-webkit-text-stroke:0.2px #111;">PERTEMUAN KE</div>
<div class="t" style="left:-6.20px;width:400px;text-align:center;top:239.77px;font-size:7.0px;color:#111;font-weight:bold;transform:scaleX(0.85);transform-origin:50% 0;-webkit-text-stroke:0.2px #111;">TANGGAL</div>
<div class="t" style="left:145.60px;width:400px;text-align:center;top:216.17px;font-size:7.0px;color:#111;font-weight:bold;transform:scaleX(0.84);transform-origin:50% 0;-webkit-text-stroke:0.2px #111;">JANUARI</div>
<div class="t" style="left:261.30px;width:400px;text-align:center;top:215.07px;font-size:7.0px;color:#111;font-weight:bold;transform:scaleX(0.86);transform-origin:50% 0;-webkit-text-stroke:0.2px #111;">KEHADIRAN</div>
<div class="t" style="left:326.10px;width:400px;text-align:center;top:221.67px;font-size:7.0px;color:#111;font-weight:bold;transform:scaleX(0.86);transform-origin:50% 0;-webkit-text-stroke:0.2px #111;">NILAI</div>
<div class="t" style="left:326.40px;width:400px;text-align:center;top:232.17px;font-size:7.0px;color:#111;font-weight:bold;transform:scaleX(0.86);transform-origin:50% 0;-webkit-text-stroke:0.2px #111;">KEHADIRAN</div>
<div class="t" style="left:84.27px;width:400px;text-align:center;top:227.21px;font-size:7.2px;color:#222;">1</div>
<div class="t" style="left:101.93px;width:400px;text-align:center;top:227.21px;font-size:7.2px;color:#222;">2</div>
<div class="t" style="left:119.40px;width:400px;text-align:center;top:227.21px;font-size:7.2px;color:#222;">3</div>
<div class="t" style="left:136.85px;width:400px;text-align:center;top:227.21px;font-size:7.2px;color:#222;">4</div>
<div class="t" style="left:154.40px;width:400px;text-align:center;top:227.21px;font-size:7.2px;color:#222;">5</div>
<div class="t" style="left:172.15px;width:400px;text-align:center;top:227.21px;font-size:7.2px;color:#222;">6</div>
<div class="t" style="left:189.75px;width:400px;text-align:center;top:227.21px;font-size:7.2px;color:#222;">7</div>
<div class="t" style="left:207.30px;width:400px;text-align:center;top:227.21px;font-size:7.2px;color:#222;">8</div>
<div class="t" style="left:224.70px;width:400px;text-align:center;top:232.42px;font-size:7.3px;color:#262626;transform:scaleX(0.9);transform-origin:50% 0;-webkit-text-stroke:0.12px #262626;">S</div>
<div class="t" style="left:242.30px;width:400px;text-align:center;top:232.42px;font-size:7.3px;color:#262626;transform:scaleX(0.9);transform-origin:50% 0;-webkit-text-stroke:0.12px #262626;">I</div>
<div class="t" style="left:259.95px;width:400px;text-align:center;top:232.42px;font-size:7.3px;color:#262626;transform:scaleX(0.9);transform-origin:50% 0;-webkit-text-stroke:0.12px #262626;">A</div>
<div class="t" style="left:287.43px;width:400px;text-align:center;top:232.42px;font-size:7.3px;color:#262626;transform:scaleX(0.9);transform-origin:50% 0;-webkit-text-stroke:0.12px #262626;">HADIR</div>
<div class="t" style="left:-80.10px;width:400px;text-align:center;top:250.97px;font-size:7.0px;color:#262626;transform:scaleX(0.9);transform-origin:50% 0;-webkit-text-stroke:0.12px #262626;">NO</div>
<div class="t" style="left:-52.85px;width:400px;text-align:center;top:250.97px;font-size:7.0px;color:#262626;transform:scaleX(0.9);transform-origin:50% 0;-webkit-text-stroke:0.12px #262626;">NIPD</div>
<div class="t" style="left:11.38px;width:400px;text-align:center;top:250.97px;font-size:7.0px;color:#262626;transform:scaleX(0.9);transform-origin:50% 0;-webkit-text-stroke:0.12px #262626;">NAMA</div>
<div class="t" style="left:66.02px;width:400px;text-align:center;top:250.97px;font-size:7.0px;color:#262626;transform:scaleX(0.9);transform-origin:50% 0;-webkit-text-stroke:0.12px #262626;">L/P</div>
<div class="t" style="left:-79.70px;width:400px;text-align:center;top:262.82px;font-size:7.4px;color:#333;transform:scaleX(0.95);transform-origin:50% 0;">1</div>
<div class="t" style="left:103.70px;width:400px;text-align:right;top:263.60px;font-size:7.3px;color:#f01c18;font-weight:bold;font-style:italic;letter-spacing:-0.3px;-webkit-text-stroke:0.3px #f01c18;">0%</div>
<div class="t" style="left:-79.70px;width:400px;text-align:center;top:274.54px;font-size:7.4px;color:#333;transform:scaleX(0.95);transform-origin:50% 0;">2</div>
<div class="t" style="left:103.70px;width:400px;text-align:right;top:275.32px;font-size:7.3px;color:#f01c18;font-weight:bold;font-style:italic;letter-spacing:-0.3px;-webkit-text-stroke:0.3px #f01c18;">0%</div>
<div class="t" style="left:-79.70px;width:400px;text-align:center;top:286.26px;font-size:7.4px;color:#333;transform:scaleX(0.95);transform-origin:50% 0;">3</div>
<div class="t" style="left:103.70px;width:400px;text-align:right;top:287.04px;font-size:7.3px;color:#f01c18;font-weight:bold;font-style:italic;letter-spacing:-0.3px;-webkit-text-stroke:0.3px #f01c18;">0%</div>
<div class="t" style="left:-79.70px;width:400px;text-align:center;top:297.98px;font-size:7.4px;color:#333;transform:scaleX(0.95);transform-origin:50% 0;">4</div>
<div class="t" style="left:103.70px;width:400px;text-align:right;top:298.76px;font-size:7.3px;color:#f01c18;font-weight:bold;font-style:italic;letter-spacing:-0.3px;-webkit-text-stroke:0.3px #f01c18;">0%</div>
<div class="t" style="left:-79.70px;width:400px;text-align:center;top:309.70px;font-size:7.4px;color:#333;transform:scaleX(0.95);transform-origin:50% 0;">5</div>
<div class="t" style="left:103.70px;width:400px;text-align:right;top:310.48px;font-size:7.3px;color:#f01c18;font-weight:bold;font-style:italic;letter-spacing:-0.3px;-webkit-text-stroke:0.3px #f01c18;">0%</div>
<div class="t" style="left:-79.70px;width:400px;text-align:center;top:321.42px;font-size:7.4px;color:#333;transform:scaleX(0.95);transform-origin:50% 0;">6</div>
<div class="t" style="left:103.70px;width:400px;text-align:right;top:322.20px;font-size:7.3px;color:#f01c18;font-weight:bold;font-style:italic;letter-spacing:-0.3px;-webkit-text-stroke:0.3px #f01c18;">0%</div>
<div class="t" style="left:-79.70px;width:400px;text-align:center;top:333.14px;font-size:7.4px;color:#333;transform:scaleX(0.95);transform-origin:50% 0;">7</div>
<div class="t" style="left:103.70px;width:400px;text-align:right;top:333.92px;font-size:7.3px;color:#f01c18;font-weight:bold;font-style:italic;letter-spacing:-0.3px;-webkit-text-stroke:0.3px #f01c18;">0%</div>
<div class="t" style="left:-79.70px;width:400px;text-align:center;top:344.86px;font-size:7.4px;color:#333;transform:scaleX(0.95);transform-origin:50% 0;">8</div>
<div class="t" style="left:103.70px;width:400px;text-align:right;top:345.64px;font-size:7.3px;color:#f01c18;font-weight:bold;font-style:italic;letter-spacing:-0.3px;-webkit-text-stroke:0.3px #f01c18;">0%</div>
<div class="t" style="left:-79.70px;width:400px;text-align:center;top:356.58px;font-size:7.4px;color:#333;transform:scaleX(0.95);transform-origin:50% 0;">9</div>
<div class="t" style="left:103.70px;width:400px;text-align:right;top:357.36px;font-size:7.3px;color:#f01c18;font-weight:bold;font-style:italic;letter-spacing:-0.3px;-webkit-text-stroke:0.3px #f01c18;">0%</div>
<div class="t" style="left:-79.70px;width:400px;text-align:center;top:368.30px;font-size:7.4px;color:#333;transform:scaleX(0.95);transform-origin:50% 0;">10</div>
<div class="t" style="left:103.70px;width:400px;text-align:right;top:369.08px;font-size:7.3px;color:#f01c18;font-weight:bold;font-style:italic;letter-spacing:-0.3px;-webkit-text-stroke:0.3px #f01c18;">0%</div>
<div class="t" style="left:-79.70px;width:400px;text-align:center;top:380.02px;font-size:7.4px;color:#333;transform:scaleX(0.95);transform-origin:50% 0;">11</div>
<div class="t" style="left:103.70px;width:400px;text-align:right;top:380.80px;font-size:7.3px;color:#f01c18;font-weight:bold;font-style:italic;letter-spacing:-0.3px;-webkit-text-stroke:0.3px #f01c18;">0%</div>
<div class="a" style="left:789.60px;top:128.70px;width:8.80px;height:261.30px;background:#f6f8f8;border-radius:4.4px;"></div>
<svg width="800" height="450" stroke="none" fill="#6e6e6e">
<path d="M791.1 134.9 h5.5 l-2.75 -3.6 z"/>
<path d="M791.3 383.6 h5.6 l-2.8 3.4 z"/>
<rect x="791.2" y="138.1" width="5.5" height="83" rx="2.75"/>
</svg>
<div class="a" style="left:1.00px;top:394.30px;width:787.20px;height:10.20px;background:#f8f8f8;border-radius:5px;"></div>
<svg width="800" height="450" stroke="none" fill="#6e6e6e">
<path d="M3.6 398.9 l3.4 -2.8 v5.6 z"/>
<rect x="10" y="396.5" width="768.2" height="5.6" rx="2.8"/>
<path d="M785.5 399.3 l-3.4 -2.8 v5.6 z"/>
</svg>
<div class="a" style="left:0.00px;top:409.75px;width:800.00px;height:12.05px;background:linear-gradient(90deg,#f3f3f3 0,#f3f3f3 370px,#f1f4f4 430px,#f0f4f4 800px);"></div>
<div class="t" style="left:6.60px;top:412.11px;font-size:7.2px;color:#3c3c3c;transform:scaleX(0.92);transform-origin:0 0;-webkit-text-stroke:0.12px #3c3c3c;">Ready</div>
<svg width="800" height="450" fill="none" stroke="#444" stroke-width="0.8">
<rect x="36.6" y="411.6" width="7.8" height="7.2"/><path d="M36.6 413.4 h7.8 M37.8 415 h3 M37.8 416.6 h2"/><circle cx="42.6" cy="417.2" r="1.6" fill="#fff"/><circle cx="42.6" cy="417.2" r="0.5" fill="#444"/>
<circle cx="58.9" cy="412.2" r="1.2"/><path d="M55.5 414.5 l3.4 1 l3.4 -1 M58.9 415.5 v2 l-2.5 2 M58.9 417.5 l2.5 2"/><path d="M55.2 418 l1.4 1.6 M62.6 418 l-1.4 1.6"/>
<g stroke="#555" stroke-width="0.7"><rect x="632.3" y="411.6" width="7.6" height="7.2"/><path d="M632.3 414 h7.6 M632.3 416.4 h7.6 M634.8 411.6 v7.2 M637.4 411.6 v7.2"/>
<rect x="655" y="411.8" width="9" height="6.8"/><path d="M657.2 411.8 v6.8 M661.8 411.8 v6.8"/>
<path d="M679 418.6 v-6.8 h8 v6.8 M681.3 411.8 v3.4 h3.4 v-3.4"/>
<path d="M698.8 415.3 h3.3 M767.4 415.3 h4.5 M769.65 413 v4.6"/></g>
<path d="M706 415.3 h58" stroke="#8a8a8a" stroke-width="0.7"/>
</svg>
<div class="a" style="left:631.20px;top:409.60px;width:16.40px;height:11.80px;background:#e6e6e6;border-radius:1px;"></div>
<svg width="800" height="450" fill="none" stroke="#555" stroke-width="0.7"><rect x="632.3" y="411.6" width="7.6" height="7.2"/><path d="M632.3 414 h7.6 M632.3 416.4 h7.6 M634.8 411.6 v7.2 M637.4 411.6 v7.2"/></svg>
<div class="a" style="left:733.60px;top:411.60px;width:3.00px;height:7.40px;background:#6a6a6a;border-radius:0.5px;"></div>
<div class="t" style="left:65.20px;top:412.41px;font-size:7.2px;color:#262626;font-weight:bold;transform:scaleX(0.87);transform-origin:0 0;">Accessibility: Investigate</div>
<div class="t" style="left:778.60px;top:412.41px;font-size:7.2px;color:#333;transform:scaleX(0.95);transform-origin:0 0;-webkit-text-stroke:0.1px #333;">100%</div>
<div class="a" style="left:0.00px;top:421.80px;width:800.00px;height:28.20px;background:linear-gradient(90deg,#d79596 0,#e0a2a2 180px,#e8acac 300px,#e9aeae 379.5px,#a9d3cb 380.5px,#a9d3cb 381.8px,#e6acac 382.8px,#e6acac 399px,#a8d0c6 400.5px,#abd2c8 520px,#aed3ca 800px);"></div>
<div class="a" style="left:0.00px;top:421.80px;width:399.50px;height:28.20px;background:linear-gradient(180deg,rgba(110,70,70,.07),rgba(255,110,130,.07));"></div>
<div class="a" style="left:207.60px;top:427.00px;width:127.70px;height:17.50px;background:#f6e0e0;border-radius:8.75px;"></div>
<svg width="800" height="450" fill="none" stroke="#222" stroke-width="1.1">
<circle cx="217.6" cy="434.8" r="3.3"/><path d="M220 437.2 l2.6 2.6"/>
</svg>
<div class="t" style="left:228.80px;top:432.83px;font-size:8px;color:#555050;">Search</div>
<svg width="800" height="450" stroke="none">
<defs><linearGradient id="wg" x1="0" y1="0" x2="1" y2="1"><stop offset="0" stop-color="#5fd0f8"/><stop offset="1" stop-color="#0a74d0"/></linearGradient></defs>
<rect x="186" y="429.4" width="6.6" height="6.6" fill="url(#wg)"/><rect x="193.4" y="429.4" width="6.6" height="6.6" fill="url(#wg)"/><rect x="186" y="436.8" width="6.6" height="6.6" fill="url(#wg)"/><rect x="193.4" y="436.8" width="6.6" height="6.6" fill="url(#wg)"/>
<rect x="342.6" y="432.8" width="9.4" height="9.4" fill="#1a1a1a" stroke="#fff" stroke-width="0.6"/><rect x="347.4" y="429" width="9.6" height="9.4" fill="#f2f2f2" stroke="#bbb" stroke-width="0.4"/>
<linearGradient id="cpa" x1="0" y1="0" x2="0" y2="1"><stop offset="0" stop-color="#2f9af0"/><stop offset="0.6" stop-color="#34c38f"/><stop offset="1" stop-color="#f6c445"/></linearGradient><linearGradient id="cpb" x1="0" y1="0" x2="0" y2="1"><stop offset="0" stop-color="#6f7cf5"/><stop offset="0.5" stop-color="#e25bb5"/><stop offset="1" stop-color="#f6894a"/></linearGradient>
<path d="M371.4 432.2 h4.6 q1.4 0 1 1.4 l-2.4 7.2 q-0.5 1.4 -2 1.4 h-3.3 q-1.4 0 -1 -1.4 l2.3 -6.8 q0.5 -1.8 1.8 -1.8 z" fill="url(#cpa)"/>
<path d="M380.2 439.4 h-4.6 q-1.4 0 -1 -1.4 l2.4 -7.2 q0.5 -1.4 2 -1.4 h3.3 q1.4 0 1 1.4 l-2.3 6.8 q-0.5 1.8 -1.8 1.8 z" fill="url(#cpb)"/>
<rect x="396" y="431" width="9" height="9" rx="1" fill="#5059c9"/><circle cx="406.5" cy="430.5" r="2.2" fill="#7b83eb"/><path d="M404 433 h5 v5 q-1 3 -4 2 z" fill="#7b83eb"/><text x="398" y="438.5" font-size="7" font-weight="bold" fill="#fff" font-family="Liberation Sans">T</text>
<path d="M420 430 h5.5 l1.5 2 h8.2 v10.5 h-15.2 z" fill="#f3b32a"/><rect x="420" y="434" width="15.2" height="8.5" fill="#ffd351"/><rect x="424.4" y="437.5" width="6.6" height="2" fill="#1f7ae0"/>
<rect x="426.5" y="445.6" width="2.4" height="0.9" fill="#555"/>
<circle cx="453.4" cy="436" r="7.3" fill="#e33b2e"/><path d="M453.4 436 L447.1 432.35 A7.3 7.3 0 0 0 449.75 442.3 Z" fill="#32a853"/><path d="M453.4 436 L449.75 442.3 A7.3 7.3 0 0 0 460.7 436 Z" fill="#32a853"/><path d="M453.4 436 L460.7 436 A7.3 7.3 0 0 1 456 442.8 Z" fill="#fbbc04"/><circle cx="453.4" cy="436" r="3.4" fill="#fff"/><circle cx="453.4" cy="436" r="2.6" fill="#1a73e8"/>
<circle cx="478.8" cy="436.2" r="7.2" fill="#1e8ee0"/><path d="M472 437 a7 7 0 0 1 13.8 -1.6 q-1 3 -5 2.5 h-4 q0 3 4 4.5 a7 7 0 0 1 -8.8 -5.4 z" fill="#4ec36a"/><circle cx="478.6" cy="437.5" r="2.6" fill="#1e8ee0"/>
<rect x="501" y="429" width="11" height="14.5" rx="1" fill="#2b7cd3"/><rect x="501" y="432.8" width="11" height="3.7" fill="#41a5ee"/><rect x="497" y="431.5" width="9" height="9" rx="1" fill="#185abd"/><text x="498" y="439.2" font-size="7.2" font-weight="bold" fill="#fff" font-family="Liberation Sans">W</text>
</svg>
<div class="a" style="left:519.00px;top:424.75px;width:22.60px;height:20.65px;background:rgba(255,255,255,.45);border-radius:3px;"></div>
<div class="a" style="left:525.90px;top:445.90px;width:9.10px;height:1.30px;background:#1f6ad8;border-radius:1px;"></div>
<svg width="800" height="450" stroke="none">
<rect x="527" y="429" width="11" height="14.5" rx="1" fill="#21a366"/><rect x="527" y="433.8" width="11" height="4.8" fill="#107c41"/><rect x="523" y="431.5" width="9" height="9" rx="1" fill="#107c41"/><text x="524.6" y="439.2" font-size="7.2" font-weight="bold" fill="#fff" font-family="Liberation Sans">X</text>
<circle cx="557" cy="436.3" r="7" fill="#ed6c47"/><path d="M557 429.3 a7 7 0 0 1 7 7 h-7 z" fill="#ff8f6b"/><rect x="549.3" y="431.6" width="8.4" height="9" rx="1" fill="#c43e1c"/><text x="550.8" y="439.2" font-size="7" font-weight="bold" fill="#fff" font-family="Liberation Sans">P</text>
<circle cx="581.5" cy="436.6" r="7.3" fill="#e33b2e"/><path d="M581.5 436.6 L575.2 432.95 A7.3 7.3 0 0 0 577.85 442.9 Z" fill="#32a853"/><path d="M581.5 436.6 L577.85 442.9 A7.3 7.3 0 0 0 588.8 436.6 Z" fill="#32a853"/><path d="M581.5 436.6 L588.8 436.6 A7.3 7.3 0 0 1 584.1 443.4 Z" fill="#fbbc04"/><circle cx="581.5" cy="436.6" r="3.4" fill="#fff"/><circle cx="581.5" cy="436.6" r="2.6" fill="#1a73e8"/>
<circle cx="585.6" cy="431.4" r="4.3" fill="#111" stroke="#fff" stroke-width="0.7"/><text x="582.6" y="433.5" font-size="4.5" font-weight="bold" fill="#fff" font-family="Liberation Sans">SE</text>
<rect x="580.2" y="446" width="2.4" height="0.9" fill="#555"/>
<path d="M601 438 q-1 -7 6 -8 q7 -1 8 5 q0 4 -4 4 q-2 0 -2 2 q0 3 -4 2.5 q-4 -1 -4 -5.5 z" fill="#5dbbe8"/><circle cx="605" cy="434" r="1.2" fill="#e94f4f"/><circle cx="608.5" cy="432.3" r="1.2" fill="#f6c23e"/><circle cx="611.5" cy="434.3" r="1.2" fill="#4fbf62"/><path d="M610 443 l5 -9 l1.2 0.7 l-4.4 9.2 z" fill="#a8622a"/>
<rect x="606.3" y="446" width="2.4" height="0.9" fill="#555"/>
</svg>
<svg width="800" height="450" fill="none" stroke="#222" stroke-width="0.9">
<path d="M669.6 437.4 l3.1 -3.1 l3.1 3.1"/>
<path d="M687 438.8 h8.5 a2.2 2.2 0 0 0 0 -4.4 a3.3 3.3 0 0 0 -6.2 -0.8 a2.6 2.6 0 0 0 -2.3 5.2 z" stroke="#222" fill="none"/>
<path d="M705.2 433.8 a6.5 6.5 0 0 1 8.8 0 M706.6 435.5 a4.4 4.4 0 0 1 6 0 M708 437.2 a2.3 2.3 0 0 1 3.2 0" stroke-width="0.8"/><circle cx="709.6" cy="439" r="0.7" fill="#222" stroke="none"/>
<path d="M719.5 434.2 h2 l2.5 -2 v8.2 l-2.5 -2 h-2 z" stroke-width="0.8"/><path d="M725.3 434.3 q1 1.9 0 3.8 M726.8 433.2 q1.8 3 0 6" stroke-width="0.7"/>
<rect x="733.3" y="433.3" width="8.2" height="5.4" rx="1" stroke-width="0.8"/><rect x="734.4" y="434.4" width="3" height="3.2" fill="#222" stroke="none"/><path d="M742.4 435 v2" stroke-width="0.9"/>
</svg>
<div class="t" style="left:388.80px;width:400px;text-align:right;top:427.74px;font-size:7.4px;color:#1a1a1a;">17:14</div>
<div class="t" style="left:388.80px;width:400px;text-align:right;top:437.24px;font-size:7.4px;color:#1a1a1a;">16/08/2025</div>
</body></html>
